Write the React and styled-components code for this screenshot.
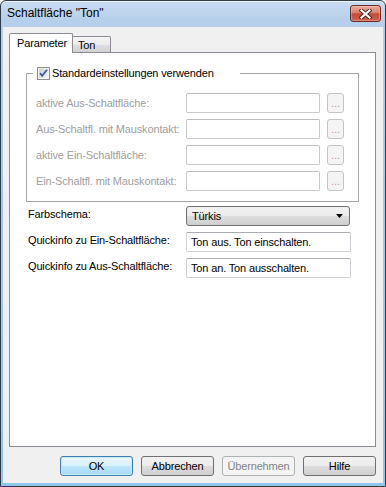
import styled, { createGlobalStyle } from "styled-components";

const GlobalStyle = createGlobalStyle`
  * { box-sizing: border-box; }
  html, body { margin: 0; padding: 0; background: #fff; }
  body {
    width: 386px;
    height: 487px;
    overflow: hidden;
    font-family: "Liberation Sans", Arial, sans-serif;
    font-size: 11px;
    letter-spacing: -0.15px;
    color: #000;
  }
`;

const DialogWindow = styled.div`
  width: 386px;
  height: 487px;
  display: flex;
  flex-direction: column;
  border: 1px solid #2e3b4b;
  border-radius: 6px 6px 0 0;
  padding: 0 2px 3px;
  background: linear-gradient(180deg, #c8dcf0 0%, #b6cfea 4%, #a6c8e8 40%, #8fc6ea 100%);
  box-shadow: inset 0 1px 0 rgba(255, 255, 255, 0.7);
`;

const TitleBar = styled.div`
  height: 26px;
  display: flex;
  justify-content: space-between;
  align-items: flex-start;
  padding: 0 2px 0 4px;
`;

const Title = styled.div`
  font-size: 12px;
  letter-spacing: 0;
  line-height: 15px;
  margin-top: 5px;
`;

const CloseButton = styled.div`
  width: 31px;
  height: 17px;
  margin-top: 4px;
  border: 1px solid #6b2a24;
  border-radius: 3px;
  background: linear-gradient(180deg, #e9ab9e 0%, #d9806f 45%, #c44a38 52%, #d06050 100%);
  box-shadow: inset 0 0 0 1px rgba(255, 220, 210, 0.35);
  display: flex;
  align-items: center;
  justify-content: center;
`;

const Client = styled.div`
  flex: 1;
  background: #f0f0f0;
  display: flex;
  flex-direction: column;
  padding: 6px 7px 7px 6px;
`;

const TabRow = styled.div`
  display: flex;
  align-items: flex-end;
  height: 20px;
  margin-bottom: -1px;
  position: relative;
  z-index: 1;
`;

const Tab = styled.div`
  border: 1px solid #898c95;
  border-bottom: none;
  border-radius: 2px 2px 0 0;
  line-height: 14px;
  ${(p) =>
    p.$active
      ? `
    width: 64px;
    height: 20px;
    padding: 2px 0 0 7px;
    background: #fff;
    position: relative;
    z-index: 2;
  `
      : `
    width: 39px;
    height: 16px;
    margin-bottom: 1px;
    margin-left: -1px;
    padding: 1px 0 0 5px;
    background: linear-gradient(180deg, #f4f4f4 0%, #ececec 50%, #dfdfdf 51%, #d2d2d2 100%);
  `}
`;

const Panel = styled.div`
  flex: 1;
  background: #fff;
  border: 1px solid #898c95;
  padding: 13px 16px 0 16px;
  display: flex;
  flex-direction: column;
`;

const Group = styled.fieldset`
  margin: 0;
  padding: 12px 14px 10px 9px;
  border: 1px solid #a5a5a5;
  min-width: 0;
`;

const GroupLegend = styled.legend`
  margin-left: -3px;
  padding: 0 0 0 4px;
  width: 207px;
  height: 15px;
  display: flex;
  align-items: center;
  gap: 2px;
  line-height: 15px;
`;

const GroupRows = styled.div`
  display: flex;
  flex-direction: column;
  gap: 6px;
`;

const GroupRow = styled.div`
  display: flex;
  align-items: center;
  height: 20px;
`;

const GroupLabel = styled.div`
  width: 150px;
  color: #a0a0a0;
  white-space: nowrap;
`;

const Field = styled.div`
  width: ${(p) => p.$w}px;
  height: 20px;
  background: #fff;
  border: 1px solid ${(p) => (p.$disabled ? "#c9c9c9" : "#cdd1d6")};
  border-top-color: ${(p) => (p.$disabled ? "#bdbdbd" : "#abadb3")};
  border-radius: 2px;
  padding: 0 4px;
  line-height: 18px;
  white-space: nowrap;
`;

const DotsButton = styled.div`
  width: 17px;
  height: 20px;
  margin-left: 7px;
  border: 1px solid #c4c4c4;
  border-radius: 3px;
  background: #f4f4f4;
  color: #c29a9a;
  text-align: center;
  line-height: 18px;
  letter-spacing: 0;
`;

const FormRows = styled.div`
  margin-top: 4px;
  padding-left: 2px;
  display: flex;
  flex-direction: column;
  gap: 6px;
`;

const FormRow = styled.div`
  display: flex;
  align-items: flex-start;
  height: 20px;
`;

const FormLabel = styled.div`
  width: 158px;
  line-height: 16px;
  white-space: nowrap;
`;

const Combo = styled.div`
  width: 164px;
  height: 20px;
  border: 1px solid #707070;
  border-radius: 3px;
  background: linear-gradient(180deg, #f2f2f2 0%, #ebebeb 50%, #dddddd 51%, #cfcfcf 100%);
  display: flex;
  align-items: center;
  justify-content: space-between;
  padding: 0 6px 0 5px;
`;

const ButtonRow = styled.div`
  display: flex;
  justify-content: flex-end;
  gap: 8px;
  margin-top: 9px;
`;

const DialogButton = styled.button`
  width: 73px;
  height: 20px;
  padding: 0;
  font: inherit;
  letter-spacing: inherit;
  line-height: 18px;
  border-radius: 3px;
  border: 1px solid #707070;
  color: #000;
  background: linear-gradient(180deg, #f2f2f2 0%, #ebebeb 50%, #dddddd 51%, #cfcfcf 100%);
  ${(p) =>
    p.$variant === "default" &&
    `
    border-color: #3c7fb1;
    background: linear-gradient(180deg, #eaf6fd 0%, #d9f0fc 50%, #bee6fd 51%, #a7d9f5 100%);
    box-shadow: inset 0 0 0 1px #c8ebfa;
  `}
  ${(p) =>
    p.$variant === "disabled" &&
    `
    border-color: #adb2b5;
    background: #f4f4f4;
    color: #838383;
  `}
`;

function CloseGlyph() {
  return (
    <svg width="13" height="10" viewBox="0 0 13 10">
      <path d="M2.5 1.5 L10.5 8.5 M10.5 1.5 L2.5 8.5" stroke="#4a2420" strokeWidth="4" strokeLinecap="square" />
      <path d="M2.5 1.5 L10.5 8.5 M10.5 1.5 L2.5 8.5" stroke="#fff" strokeWidth="2.2" strokeLinecap="square" />
    </svg>
  );
}

function CheckBox() {
  return (
    <svg width="13" height="13" viewBox="0 0 13 13">
      <defs>
        <linearGradient id="cbfill" x1="0" y1="0" x2="1" y2="1">
          <stop offset="0" stopColor="#cfcfcf" />
          <stop offset="1" stopColor="#f7f7f7" />
        </linearGradient>
      </defs>
      <rect x="0.5" y="0.5" width="12" height="12" fill="#f4f4f4" stroke="#8e8f8f" />
      <rect x="2" y="2" width="9" height="9" fill="url(#cbfill)" />
      <path d="M3 6.2 L5.2 8.8 L10 2.8" fill="none" stroke="#3f5aa0" strokeWidth="1.8" />
    </svg>
  );
}

function Arrow() {
  return (
    <svg width="7" height="4" viewBox="0 0 7 4">
      <polygon points="0,0 7,0 3.5,4" fill="#000" />
    </svg>
  );
}

const imageRows = [
  "aktive Aus-Schaltfläche:",
  "Aus-Schaltfl. mit Mauskontakt:",
  "aktive Ein-Schaltfläche:",
  "Ein-Schaltfl. mit Mauskontakt:",
];

export default function App() {
  return (
    <>
      <GlobalStyle />
      <DialogWindow>
        <TitleBar>
          <Title>Schaltfläche "Ton"</Title>
          <CloseButton>
            <CloseGlyph />
          </CloseButton>
        </TitleBar>
        <Client>
          <TabRow>
            <Tab $active>Parameter</Tab>
            <Tab>Ton</Tab>
          </TabRow>
          <Panel>
            <Group>
              <GroupLegend>
                <CheckBox />
                <span>Standardeinstellungen verwenden</span>
              </GroupLegend>
              <GroupRows>
                {imageRows.map((label) => (
                  <GroupRow key={label}>
                    <GroupLabel>{label}</GroupLabel>
                    <Field $w={134} $disabled />
                    <DotsButton>...</DotsButton>
                  </GroupRow>
                ))}
              </GroupRows>
            </Group>
            <FormRows>
              <FormRow>
                <FormLabel>Farbschema:</FormLabel>
                <Combo>
                  <span>Türkis</span>
                  <Arrow />
                </Combo>
              </FormRow>
              <FormRow>
                <FormLabel>Quickinfo zu Ein-Schaltfläche:</FormLabel>
                <Field $w={165}>Ton aus. Ton einschalten.</Field>
              </FormRow>
              <FormRow>
                <FormLabel>Quickinfo zu Aus-Schaltfläche:</FormLabel>
                <Field $w={165}>Ton an. Ton ausschalten.</Field>
              </FormRow>
            </FormRows>
          </Panel>
          <ButtonRow>
            <DialogButton $variant="default">OK</DialogButton>
            <DialogButton>Abbrechen</DialogButton>
            <DialogButton $variant="disabled">Übernehmen</DialogButton>
            <DialogButton>Hilfe</DialogButton>
          </ButtonRow>
        </Client>
      </DialogWindow>
    </>
  );
}
